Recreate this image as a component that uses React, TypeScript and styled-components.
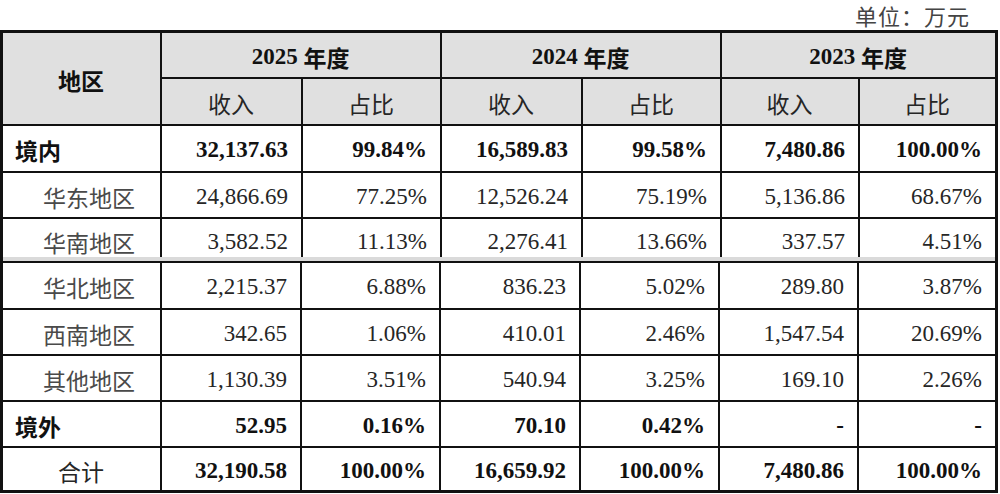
import React from "react";
import styled, { createGlobalStyle } from "styled-components";

const GlobalStyle = createGlobalStyle`
  html, body {
    margin: 0;
    padding: 0;
    background: #ffffff;
  }
  body {
    font-family: "Liberation Serif", "Noto Sans CJK SC", serif;
    color: #1a1a1a;
  }
`;

const Page = styled.div`
  width: 1000px;
  height: 494px;
  overflow: hidden;
  display: flex;
  flex-direction: column;
`;

const Caption = styled.div`
  height: 30px;
  line-height: 30px;
  padding-right: 30px;
  text-align: right;
  font-family: "Noto Sans CJK SC", sans-serif;
  font-size: 22px;
  letter-spacing: 1px;
  color: #444;
`;

const Sheet = styled.div`
  width: 998px;
  box-sizing: border-box;
  border: 3px solid #111;
  display: flex;
  flex-direction: column;
`;

const Grid = styled.div<{ $cols: string; $rows: string; $topLine?: boolean }>`
  display: grid;
  grid-template-columns: ${(p) => p.$cols};
  grid-template-rows: ${(p) => p.$rows};
  gap: 2px;
  background: #111;
  border-top: ${(p) => (p.$topLine ? "2px solid #111" : "none")};
`;

const Seam = styled.div`
  height: 4px;
  background: #dadada;
`;

type Align = "left" | "center" | "right";

const Cell = styled.div<{
  $align?: Align;
  $head?: boolean;
  $bold?: boolean;
  $indent?: boolean;
  $cut?: boolean;
  $rowSpan?: number;
  $colSpan?: number;
}>`
  display: flex;
  align-items: center;
  justify-content: ${(p) =>
    p.$align === "left" ? "flex-start" : p.$align === "center" ? "center" : "flex-end"};
  box-sizing: border-box;
  padding: ${(p) => (p.$cut ? "7px" : "3px")} 13px 0 ${(p) => (p.$indent ? "40px" : "12px")};
  background: ${(p) => (p.$head ? "#e0e0e0" : "#ffffff")};
  font-family: "Liberation Serif", "Noto Sans CJK SC", serif;
  font-size: 23px;
  font-weight: ${(p) => (p.$bold ? 700 : 400)};
  color: ${(p) => (p.$bold ? "#111" : "#262626")};
  white-space: nowrap;
  grid-row: ${(p) => (p.$rowSpan ? `span ${p.$rowSpan}` : "auto")};
  grid-column: ${(p) => (p.$colSpan ? `span ${p.$colSpan}` : "auto")};
`;

const Label = styled.span<{ $soft?: boolean }>`
  font-family: "Noto Sans CJK SC", sans-serif;
  color: ${(p) => (p.$soft ? "#4a4a4a" : "inherit")};
`;

type Row = {
  name: string;
  kind: "total" | "sub" | "sum";
  values: string[];
  cut?: boolean;
};

const upperRows: Row[] = [
  { name: "境内", kind: "total", values: ["32,137.63", "99.84%", "16,589.83", "99.58%", "7,480.86", "100.00%"] },
  { name: "华东地区", kind: "sub", values: ["24,866.69", "77.25%", "12,526.24", "75.19%", "5,136.86", "68.67%"] },
  { name: "华南地区", kind: "sub", values: ["3,582.52", "11.13%", "2,276.41", "13.66%", "337.57", "4.51%"], cut: true },
];

const lowerRows: Row[] = [
  { name: "华北地区", kind: "sub", values: ["2,215.37", "6.88%", "836.23", "5.02%", "289.80", "3.87%"] },
  { name: "西南地区", kind: "sub", values: ["342.65", "1.06%", "410.01", "2.46%", "1,547.54", "20.69%"] },
  { name: "其他地区", kind: "sub", values: ["1,130.39", "3.51%", "540.94", "3.25%", "169.10", "2.26%"] },
  { name: "境外", kind: "total", values: ["52.95", "0.16%", "70.10", "0.42%", "-", "-"] },
  { name: "合计", kind: "sum", values: ["32,190.58", "100.00%", "16,659.92", "100.00%", "7,480.86", "100.00%"] },
];

const years = ["2025", "2024", "2023"];

function DataRow({ row }: { row: Row }) {
  const boldNums = row.kind !== "sub";
  return (
    <>
      <Cell
        $align={row.kind === "sum" ? "center" : "left"}
        $indent={row.kind === "sub"}
        $bold={row.kind === "total"}
        $cut={row.cut}
      >
        <Label $soft={row.kind === "sub"}>{row.name}</Label>
      </Cell>
      {row.values.map((v, i) => (
        <Cell key={i} $align="right" $bold={boldNums} $cut={row.cut}>
          {v}
        </Cell>
      ))}
    </>
  );
}

export default function App() {
  return (
    <>
      <GlobalStyle />
      <Page>
        <Caption>单位：万元</Caption>
        <Sheet>
          <Grid
            $cols="157px 139px 137px 139px 137px 136px 135px"
            $rows="44px 45px 45px 44px 38px"
          >
            <Cell $head $align="center" $rowSpan={2} $bold>
              <Label>地区</Label>
            </Cell>
            {years.map((y) => (
              <Cell key={y} $head $align="center" $colSpan={2} $bold>
                {y}&nbsp;<Label>年度</Label>
              </Cell>
            ))}
            {years.map((y) => (
              <React.Fragment key={y}>
                <Cell $head $align="center">
                  <Label>收入</Label>
                </Cell>
                <Cell $head $align="center">
                  <Label>占比</Label>
                </Cell>
              </React.Fragment>
            ))}
            {upperRows.map((r) => (
              <DataRow key={r.name} row={r} />
            ))}
          </Grid>
          <Seam />
          <Grid
            $topLine
            $cols="157px 138px 137px 138px 137px 137px 136px"
            $rows="45px 44px 44px 44px 42px"
          >
            {lowerRows.map((r) => (
              <DataRow key={r.name} row={r} />
            ))}
          </Grid>
        </Sheet>
      </Page>
    </>
  );
}
